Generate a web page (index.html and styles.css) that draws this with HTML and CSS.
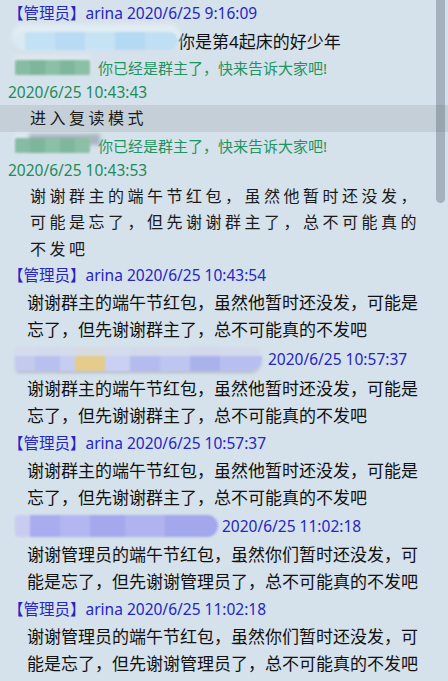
FILE: index.html
```html
<!DOCTYPE html>
<html lang="zh-CN">
<head>
<meta charset="utf-8">
<title>群聊记录</title>
<link rel="stylesheet" href="styles.css">
</head>
<body>
<div class="chat">
  <div class="head">【管理员】arina 2020/6/25 9:16:09</div>
  <div class="row r-nick">
    <span class="blur blur-cyan"></span>
    <span class="msg-inline">你是第4起床的好少年</span>
  </div>
  <div class="row r-sys">
    <span class="blur blur-green"></span>
    <span class="sys">你已经是群主了，快来告诉大家吧!</span>
  </div>
  <div class="ts">2020/6/25 10:43:43</div>
  <div class="band hand">进入复读模式</div>
  <div class="row r-sys">
    <span class="blur blur-green blur-green2"></span>
    <span class="sys">你已经是群主了，快来告诉大家吧!</span>
  </div>
  <div class="ts">2020/6/25 10:43:53</div>
  <div class="hand hand-msg">谢谢群主的端午节红包，虽然他暂时还没发，可能是忘了，但先谢谢群主了，总不可能真的不发吧</div>
  <div class="head">【管理员】arina 2020/6/25 10:43:54</div>
  <div class="msg">谢谢群主的端午节红包，虽然他暂时还没发，可能是忘了，但先谢谢群主了，总不可能真的不发吧</div>
  <div class="row r-blob1">
    <span class="blur blur-violet"></span>
    <span class="who">2020/6/25 10:57:37</span>
  </div>
  <div class="msg">谢谢群主的端午节红包，虽然他暂时还没发，可能是忘了，但先谢谢群主了，总不可能真的不发吧</div>
  <div class="head">【管理员】arina 2020/6/25 10:57:37</div>
  <div class="msg">谢谢群主的端午节红包，虽然他暂时还没发，可能是忘了，但先谢谢群主了，总不可能真的不发吧</div>
  <div class="row r-blob2">
    <span class="blur blur-lav"></span>
    <span class="who who2">2020/6/25 11:02:18</span>
  </div>
  <div class="msg">谢谢管理员的端午节红包，虽然你们暂时还没发，可能是忘了，但先谢谢管理员了，总不可能真的不发吧</div>
  <div class="head">【管理员】arina 2020/6/25 11:02:18</div>
  <div class="msg">谢谢管理员的端午节红包，虽然你们暂时还没发，可能是忘了，但先谢谢管理员了，总不可能真的不发吧</div>
</div>
<div class="scrollbar"><div class="thumb"></div></div>
</body>
</html>
```

FILE: styles.css
```css
html, body {
  margin: 0;
  padding: 0;
}
body {
  width: 448px;
  height: 681px;
  overflow: hidden;
  background: #d5e1eb;
  font-family: "Noto Sans", "Noto Sans CJK SC", sans-serif;
  color: #111;
  position: relative;
}
.chat {
  display: flex;
  flex-direction: column;
}
.head {
  height: 27px;
  line-height: 27px;
  padding-left: 8px;
  font-size: 15.5px;
  color: #2626c4;
  white-space: nowrap;
}
.row {
  display: flex;
  align-items: center;
  padding-left: 15px;
}
.r-nick { height: 27px; }
.r-sys { height: 26px; }
.ts {
  height: 25px;
  line-height: 25px;
  padding-left: 8px;
  font-size: 15.5px;
  color: #1e8c5a;
}
.msg-inline {
  font-size: 17px;
}
.sys {
  font-size: 15px;
  color: #1f9460;
  margin-left: 8px;
}
.band {
  position: relative;
  z-index: 2;
  height: 27px;
  line-height: 27px;
  background: rgba(0, 0, 0, 0.08);
}
.hand {
  font-size: 16px;
  letter-spacing: 3.5px;
  padding-left: 30px;
  color: #1a1a1a;
}
.hand-msg {
  line-height: 26.3px;
  width: 400px;
}
.msg {
  font-size: 17px;
  line-height: 27.5px;
  padding-left: 27px;
  width: 400px;
}
.who {
  font-size: 15.5px;
  color: #2626c4;
  margin-left: 6px;
}
.who2 { margin-left: 4px; }
.r-blob1 { height: 31px; }
.r-blob2 { height: 29px; }

.blur {
  display: block;
  flex: none;
  filter: blur(1.2px);
}
.blur-cyan {
  width: 163px;
  height: 18px;
  border-radius: 9px;
  background: linear-gradient(90deg, #dbe9f3 0 10px, #c3e1f5 10px 40px, #b8dbf3 40px 70px, #c6e3f6 70px 100px, #b4d9f2 100px 130px, #c0def4 130px 163px);
  box-shadow: 0 -5px 4px 3px #e2ecf3;
}
.blur-green {
  width: 75px;
  height: 15px;
  background: linear-gradient(90deg, #86bca4 0 15px, #7db69b 15px 30px, #8ac0a6 30px 45px, #7fb79d 45px 60px, #8bbfa6 60px 75px);
  box-shadow: 0 -4px 4px 1px #dfe8ee;
  border-radius: 2px;
}
.blur-green2 {
  box-shadow: 12px -6px 3px -2px #aab6be, 0 -4px 4px 1px #dfe8ee;
}
.blur-violet {
  width: 247px;
  height: 24px;
  border-radius: 4px 14px 14px 4px;
  background:
    linear-gradient(180deg, rgba(214,221,235,0.9) 0 9px, transparent 9px),
    linear-gradient(90deg, #c4caee 0 20px, #b9c0ef 20px 45px, #c7cdf1 45px 60px, #e6cc8a 60px 90px, #c9d0f3 90px 115px, #b4bbef 115px 145px, #bec5f1 145px 175px, #aab2ec 175px 205px, #b8bff0 205px 247px);
  box-shadow: 0 3px 3px -1px #b4bcc8;
}
.blur-lav {
  width: 203px;
  height: 22px;
  border-radius: 4px 11px 11px 4px;
  background: linear-gradient(90deg, #c9ccf0 0 15px, #a9acee 15px 45px, #b3b6f1 45px 75px, #a5a8ec 75px 110px, #b0b3ef 110px 150px, #a3a7eb 150px 203px);
}
.scrollbar {
  position: absolute;
  top: 0;
  right: 0;
  width: 12px;
  height: 681px;
  z-index: 1;
}
.thumb {
  width: 9px;
  height: 203px;
  background: #a5b2bd;
  border-radius: 0 0 5px 5px;
}
```
